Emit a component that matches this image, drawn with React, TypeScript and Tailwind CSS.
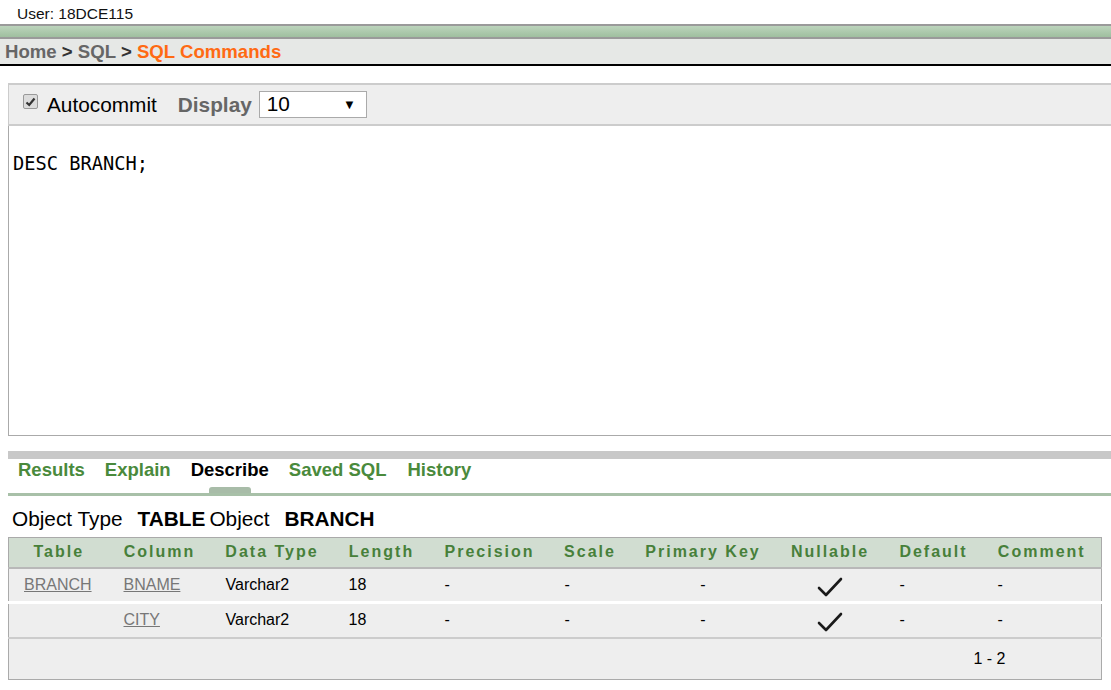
import React from "react";

const Check = () => (
  <svg width="26" height="22" viewBox="0 0 26 22" className="inline-block">
    <path d="M2 12 L9 19 L24 3" fill="none" stroke="#1a1a1a" strokeWidth="2.6" strokeLinecap="round" strokeLinejoin="round" />
  </svg>
);

const cols = [
  { h: "Table", w: 100 },
  { h: "Column", w: 102 },
  { h: "Data Type", w: 123 },
  { h: "Length", w: 96 },
  { h: "Precision", w: 120 },
  { h: "Scale", w: 81 },
  { h: "Primary Key", w: 145 },
  { h: "Nullable", w: 109 },
  { h: "Default", w: 98 },
  { h: "Comment", w: 119 },
];

const rows = [
  { table: "BRANCH", col: "BNAME" },
  { table: "", col: "CITY" },
];

export default function App() {
  return (
    <div className="w-[1111px] h-[690px] overflow-hidden bg-white text-black" style={{ fontFamily: '"Liberation Sans", Arial, sans-serif' }}>
      <div className="h-[24px] pl-[17px] text-[15.5px] leading-[28px] text-[#111]">User: 18DCE115</div>
      <div className="border-t-2 border-b-2 border-[#9a9a9a] h-[15px] bg-gradient-to-b from-[#bcd4bc] to-[#9fbf9f]" />
      <div className="h-[25px] bg-[#e6e8e6] pl-[5px] text-[18.6px] font-bold leading-[25px] text-[#666]">
        Home <span className="text-[#333]">&gt;</span> SQL <span className="text-[#333]">&gt;</span>{" "}
        <span className="text-[#ff6a13]">SQL Commands</span>
      </div>
      <div className="h-[2px] bg-black" />

      <div className="ml-[8px] mt-[17px] w-[1110px]">
        <div className="h-[43px] bg-[#eeeeee] border-t-2 border-b-2 border-l border-[#cccccc] flex items-center pl-[14px]">
          <div className="w-[15px] h-[15px] rounded-[2px] border border-[#999] bg-[#dcdcdc] flex items-center justify-center mt-[-6px]">
            <svg width="11" height="10" viewBox="0 0 11 10">
              <path d="M1.5 5.5 L4.2 8 L9.5 1.5" fill="none" stroke="#333" strokeWidth="2.2" />
            </svg>
          </div>
          <span className="ml-[9px] text-[20.8px]">Autocommit</span>
          <span className="ml-[21px] text-[20.8px] font-bold text-[#666]">Display</span>
          <div className="ml-[7px] w-[108px] h-[27px] bg-white border border-[#aaa] flex items-center justify-between pl-[7px] pr-[10px]">
            <span className="text-[20.8px] leading-none">10</span>
            <span className="text-[13px] leading-none">▼</span>
          </div>
        </div>
        <div className="h-[310px] bg-white border-l border-b border-[#aaaaaa] pt-[25px] pl-[4px]">
          <div className="text-[18.7px] leading-[26px]" style={{ fontFamily: '"DejaVu Sans Mono", monospace' }}>DESC BRANCH;</div>
        </div>

        <div className="mt-[15px] h-[8px] bg-[#c8c8c8]" />
        <div className="flex h-[28px] items-start pl-[10px] text-[18.5px] font-bold leading-[22px] text-[#4a8a3c]">
          <span className="mr-[20px]">Results</span>
          <span className="mr-[20px]">Explain</span>
          <span className="mr-[20px] text-black">Describe</span>
          <span className="mr-[21px]">Saved SQL</span>
          <span>History</span>
        </div>
        <div className="h-[6px] pl-[201px]">
          <div className="w-[42px] h-[6px] rounded-t-[3px] bg-[#a8bca8]" />
        </div>
        <div className="h-[3px] bg-[#a8c0a8]" />
        <div className="h-[41px] flex items-center pt-[5px] pl-[4px] text-[20.8px]">
          <span>Object Type</span>
          <span className="ml-[15px] font-bold">TABLE</span>
          <span className="ml-[4px]">Object</span>
          <span className="ml-[15px] font-bold">BRANCH</span>
        </div>

        <table className="border-collapse border border-[#aaaaaa] table-fixed w-[1094px]">
          <colgroup>
            {cols.map((c) => (
              <col key={c.h} style={{ width: c.w }} />
            ))}
          </colgroup>
          <thead>
            <tr className="bg-[#d1ddd1] h-[30px] border-b-2 border-[#b8b8b8]">
              {cols.map((c) => (
                <th key={c.h} className="text-center text-[16px] font-bold tracking-[2px] text-[#47803a] whitespace-nowrap p-0">
                  {c.h}
                </th>
              ))}
            </tr>
          </thead>
          <tbody className="text-[16px]">
            {rows.map((r, i) => (
              <tr key={i} className={`bg-[#eeeeee] h-[35px] border-b-2 border-[#cccccc] ${i === 0 ? "border-t border-t-white" : "border-t-[3px] border-t-white"}`}>
                <td className="pl-[15px] text-[#777] underline">{r.table}</td>
                <td className="pl-[15px] text-[#777] underline">{r.col}</td>
                <td className="pl-[15px]">Varchar2</td>
                <td className="pl-[15px]">18</td>
                <td className="pl-[15px]">-</td>
                <td className="pl-[15px]">-</td>
                <td className="text-center">-</td>
                <td className="text-center pt-[2px]"><Check /></td>
                <td className="pl-[15px]">-</td>
                <td className="pl-[15px]">-</td>
              </tr>
            ))}
            <tr className="bg-[#eeeeee] h-[42px]">
              <td colSpan={9} />
              <td className="text-[16px]"><span className="ml-[-9px]">1 - 2</span></td>
            </tr>
          </tbody>
        </table>
      </div>
    </div>
  );
}
